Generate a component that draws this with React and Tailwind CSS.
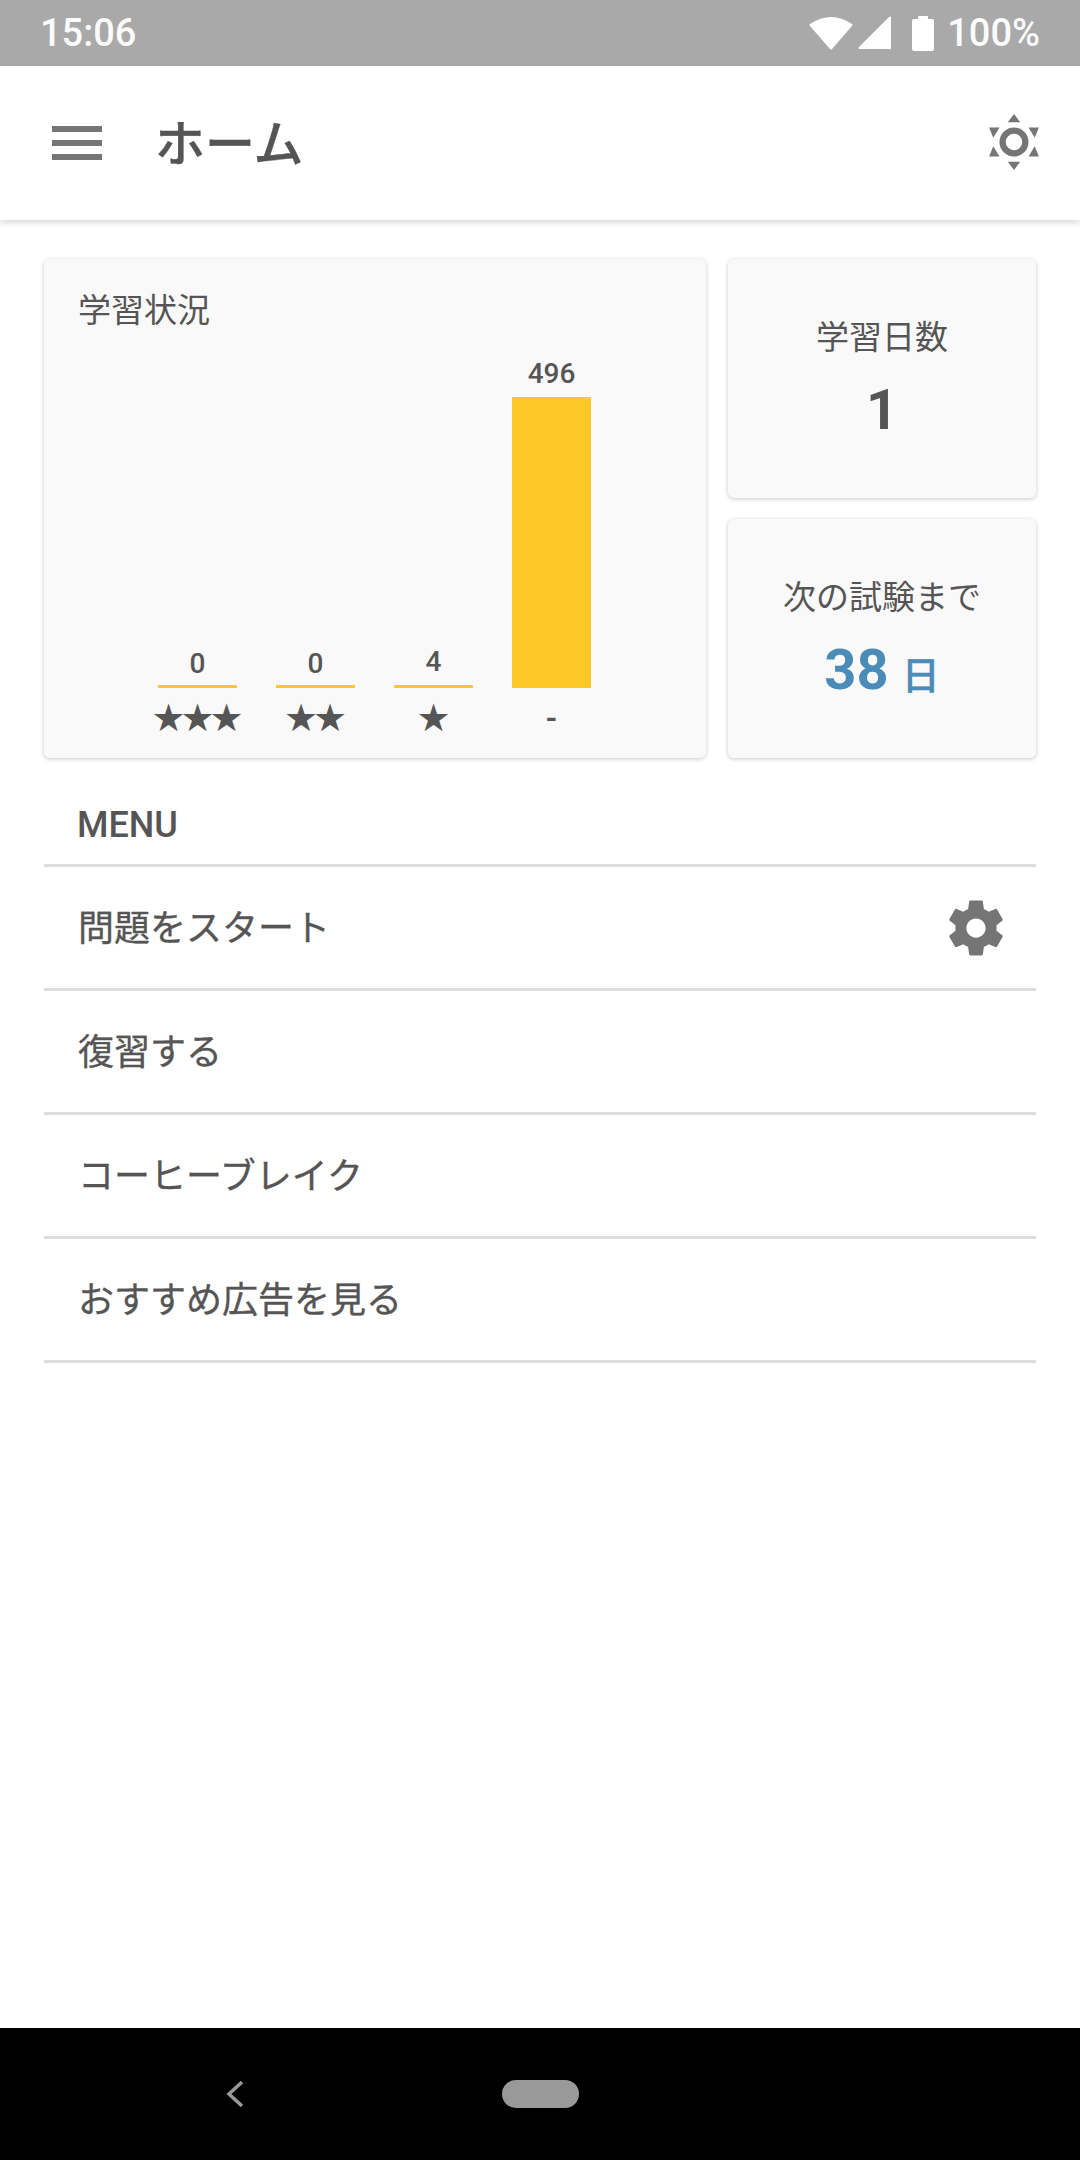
const jp = "font-['Noto_Sans_CJK_JP',sans-serif]";
const roboto = "font-['Roboto','Noto_Sans_CJK_JP',sans-serif]";

const starClass = "font-['DejaVu_Sans',sans-serif] text-[38px] tracking-[-5px] font-normal pr-[5px]";
const dashClass = "font-['Roboto',sans-serif] text-[30px] font-bold";

const bars = [
  { value: "0", stars: "★★★", mark: starClass, bar: "h-[3px]", label: "mb-[7px]" },
  { value: "0", stars: "★★", mark: starClass, bar: "h-[3px]", label: "mb-[7px]" },
  { value: "4", stars: "★", mark: starClass, bar: "h-[3px]", label: "mb-[9px]" },
  { value: "496", stars: "-", mark: dashClass, bar: "h-[291px]", label: "mb-[9px]" },
];

const menu = ["問題をスタート", "復習する", "コーヒーブレイク", "おすすめ広告を見る"];

function StatusBar() {
  return (
    <div className={`flex h-[66px] items-center justify-between bg-[#a9a9a9] pl-[40px] pr-[40px] text-[38px] font-medium text-[#fbfbfb] ${roboto}`}>
      <span className="leading-none">15:06</span>
      <div className="flex items-center">
        <svg width="44" height="34" viewBox="0 0 44 34" className="mr-[5px]">
          <path d="M1 8 Q22 -6 43 8 Q44 9 43 10 L23 33 Q22 34 21 33 L1 10 Q0 9 1 8 Z" fill="#fff" />
        </svg>
        <svg width="34" height="34" viewBox="0 0 34 34" className="mr-[20px]">
          <path d="M33 1 V33 H2 Q0 33 1 31 L31 1 Q33 0 33 1 Z" fill="#fff" />
        </svg>
        <svg width="22" height="36" viewBox="0 0 22 36" className="mr-[13px]">
          <path d="M6 2 Q6 1 7 1 H15 Q16 1 16 2 V4 H20 Q22 4 22 6 V34 Q22 36 20 36 H2 Q0 36 0 34 V6 Q0 4 2 4 H6 Z" fill="#fff" />
        </svg>
        <span className="leading-none">100%</span>
      </div>
    </div>
  );
}

function Header() {
  return (
    <div className="relative z-10 flex h-[154px] items-center bg-white pl-[52px] pr-[41px] shadow-[0_3px_6px_rgba(0,0,0,0.14)]">
      <div className="flex w-[50px] flex-col gap-[8px]">
        <div className="h-[6px] bg-[#757575]" />
        <div className="h-[6px] bg-[#757575]" />
        <div className="h-[6px] bg-[#757575]" />
      </div>
      <h1 className={`ml-[53px] flex-1 pb-[6px] text-[50px] font-medium leading-none text-[#555] [-webkit-text-stroke:0.4px_#555] ${jp}`}>ホーム</h1>
      <svg width="50" height="56" viewBox="0 0 48 54" className="mb-[2px]">
        <circle cx="24" cy="27" r="11" fill="none" stroke="#757575" strokeWidth="6" />
        <path fill="#757575" d="M24 0 L30 8 H18 Z M24 54 L18 46 H30 Z M0 13 L10 13 L4 23 Z M48 13 L44 23 L38 13 Z M0 41 L4 31 L10 41 Z M48 41 L38 41 L44 31 Z" />
      </svg>
    </div>
  );
}

function StatCard({ title, children }) {
  return (
    <div className="flex h-[239px] flex-col items-center justify-center rounded-[6px] bg-[#f9f9f9] shadow-[0_1px_4px_rgba(0,0,0,0.22)]">
      <div className={`text-[33px] leading-none text-[#555] ${jp}`}>{title}</div>
      {children}
    </div>
  );
}

function Chart() {
  return (
    <div className="flex h-[499px] w-[662px] flex-col rounded-[6px] bg-[#f9f9f9] pl-[34px] pt-[33px] shadow-[0_1px_4px_rgba(0,0,0,0.22)]">
      <div className={`text-[33px] leading-none text-[#555] ${jp}`}>学習状況</div>
      <div className="ml-[80px] mt-[36px] flex h-[327px] items-end gap-[39px]">
        {bars.map((b, i) => (
          <div key={i} className="flex w-[79px] flex-col items-center">
            <span className={`text-[28px] font-medium leading-none text-[#555] ${roboto} ${b.label}`}>{b.value}</span>
            <div className={`w-full bg-[#ffc928] ${b.bar}`} />
          </div>
        ))}
      </div>
      <div className="ml-[80px] mt-[12px] flex gap-[39px]">
        {bars.map((b, i) => (
          <div key={i} className={`flex w-[79px] justify-center whitespace-nowrap leading-[36px] text-[#555] ${b.mark}`}>
            {b.stars}
          </div>
        ))}
      </div>
    </div>
  );
}

function Menu() {
  return (
    <div className="mx-[44px] mt-[49px]">
      <div className={`border-b-[3px] border-[#dedede] pb-[21px] pl-[33px] text-[36px] font-medium leading-[36px] text-[#555] ${roboto}`}>MENU</div>
      {menu.map((m, i) => (
        <div key={m} className="flex h-[124px] items-center justify-between border-b-[3px] border-[#dedede] pb-[5px] pl-[34px] pr-[27px]">
          <span className={`text-[36px] leading-none text-[#555] [-webkit-text-stroke:0.35px_#555] ${jp}`}>{m}</span>
          {i === 0 && (
            <svg width="66" height="66" viewBox="0 0 24 24" className="mt-[5px]">
              <path fill="#757575" d="M19.43 12.98c.04-.32.07-.64.07-.98s-.03-.66-.07-.98l2.11-1.65c.19-.15.24-.42.12-.64l-2-3.46c-.12-.22-.39-.3-.61-.22l-2.49 1c-.52-.4-1.08-.73-1.69-.98l-.38-2.65C14.46 2.18 14.25 2 14 2h-4c-.25 0-.46.18-.49.42l-.38 2.65c-.61.25-1.17.59-1.69.98l-2.49-1c-.23-.09-.49 0-.61.22l-2 3.46c-.13.22-.07.49.12.64l2.11 1.65c-.04.32-.07.65-.07.98s.03.66.07.98l-2.11 1.65c-.19.15-.24.42-.12.64l2 3.46c.12.22.39.3.61.22l2.49-1c.52.4 1.08.73 1.69.98l.38 2.65c.03.24.24.42.49.42h4c.25 0 .46-.18.49-.42l.38-2.65c.61-.25 1.17-.59 1.69-.98l2.49 1c.23.09.49 0 .61-.22l2-3.46c.12-.22.07-.49-.12-.64l-2.11-1.65zM12 15.5c-1.93 0-3.5-1.57-3.5-3.5s1.57-3.5 3.5-3.5 3.5 1.57 3.5 3.5-1.57 3.5-3.5 3.5z" />
            </svg>
          )}
        </div>
      ))}
    </div>
  );
}

export default function App() {
  return (
    <div className="flex h-[2160px] w-[1080px] flex-col overflow-hidden bg-white">
      <StatusBar />
      <Header />
      <div className="flex-1">
        <div className="flex gap-[22px] px-[44px] pt-[39px]">
          <Chart />
          <div className="flex w-[308px] flex-col gap-[21px]">
            <StatCard title="学習日数">
              <div className={`mt-[30px] text-[56px] font-bold leading-none text-[#555] ${roboto}`}>1</div>
            </StatCard>
            <StatCard title="次の試験まで">
              <div className={`mt-[30px] flex items-baseline text-[#4a8bb8] ${roboto}`}>
                <span className="text-[56px] font-bold leading-none">38</span>
                <span className={`ml-[13px] text-[38px] font-medium leading-none [-webkit-text-stroke:0.4px_#4a8bb8] ${jp}`}>日</span>
              </div>
            </StatCard>
          </div>
        </div>
        <Menu />
      </div>
      <div className="flex h-[132px] items-center bg-black pl-[225px]">
        <svg width="20" height="28" viewBox="0 0 20 28">
          <path d="M17 2 L4 14 L17 26" fill="none" stroke="#999" strokeWidth="3.5" />
        </svg>
        <div className="ml-[257px] h-[28px] w-[77px] rounded-full bg-[#999]" />
      </div>
    </div>
  );
}
